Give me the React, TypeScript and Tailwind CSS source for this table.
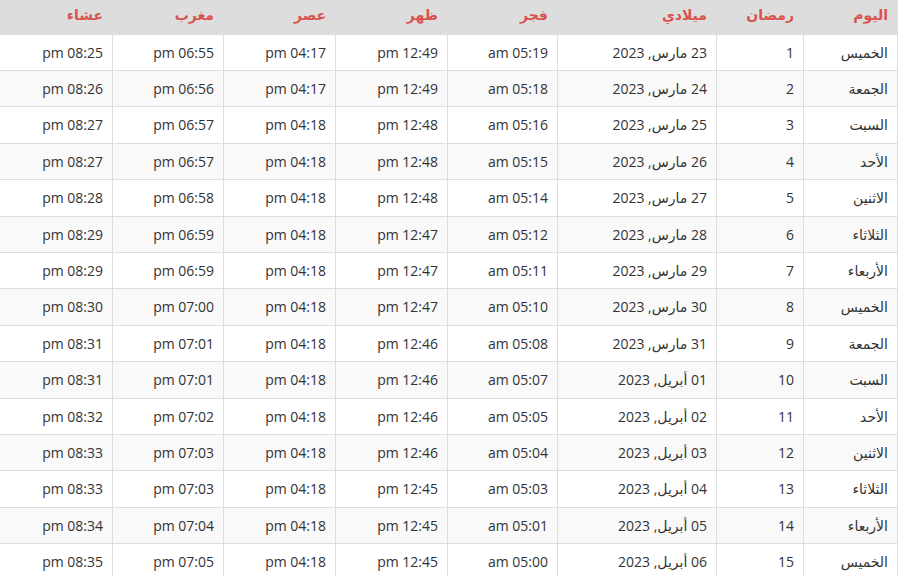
import React from 'react';

interface Row {
  day: string;
  ramadan: number;
  date: string;
  fajr: string;
  dhuhr: string;
  asr: string;
  maghrib: string;
  isha: string;
}

const rows: Row[] = [
  { day: 'الخميس', ramadan: 1, date: '23 مارس, 2023', fajr: '05:19 am', dhuhr: '12:49 pm', asr: '04:17 pm', maghrib: '06:55 pm', isha: '08:25 pm' },
  { day: 'الجمعة', ramadan: 2, date: '24 مارس, 2023', fajr: '05:18 am', dhuhr: '12:49 pm', asr: '04:17 pm', maghrib: '06:56 pm', isha: '08:26 pm' },
  { day: 'السبت', ramadan: 3, date: '25 مارس, 2023', fajr: '05:16 am', dhuhr: '12:48 pm', asr: '04:18 pm', maghrib: '06:57 pm', isha: '08:27 pm' },
  { day: 'الأحد', ramadan: 4, date: '26 مارس, 2023', fajr: '05:15 am', dhuhr: '12:48 pm', asr: '04:18 pm', maghrib: '06:57 pm', isha: '08:27 pm' },
  { day: 'الاثنين', ramadan: 5, date: '27 مارس, 2023', fajr: '05:14 am', dhuhr: '12:48 pm', asr: '04:18 pm', maghrib: '06:58 pm', isha: '08:28 pm' },
  { day: 'الثلاثاء', ramadan: 6, date: '28 مارس, 2023', fajr: '05:12 am', dhuhr: '12:47 pm', asr: '04:18 pm', maghrib: '06:59 pm', isha: '08:29 pm' },
  { day: 'الأربعاء', ramadan: 7, date: '29 مارس, 2023', fajr: '05:11 am', dhuhr: '12:47 pm', asr: '04:18 pm', maghrib: '06:59 pm', isha: '08:29 pm' },
  { day: 'الخميس', ramadan: 8, date: '30 مارس, 2023', fajr: '05:10 am', dhuhr: '12:47 pm', asr: '04:18 pm', maghrib: '07:00 pm', isha: '08:30 pm' },
  { day: 'الجمعة', ramadan: 9, date: '31 مارس, 2023', fajr: '05:08 am', dhuhr: '12:46 pm', asr: '04:18 pm', maghrib: '07:01 pm', isha: '08:31 pm' },
  { day: 'السبت', ramadan: 10, date: '01 أبريل, 2023', fajr: '05:07 am', dhuhr: '12:46 pm', asr: '04:18 pm', maghrib: '07:01 pm', isha: '08:31 pm' },
  { day: 'الأحد', ramadan: 11, date: '02 أبريل, 2023', fajr: '05:05 am', dhuhr: '12:46 pm', asr: '04:18 pm', maghrib: '07:02 pm', isha: '08:32 pm' },
  { day: 'الاثنين', ramadan: 12, date: '03 أبريل, 2023', fajr: '05:04 am', dhuhr: '12:46 pm', asr: '04:18 pm', maghrib: '07:03 pm', isha: '08:33 pm' },
  { day: 'الثلاثاء', ramadan: 13, date: '04 أبريل, 2023', fajr: '05:03 am', dhuhr: '12:45 pm', asr: '04:18 pm', maghrib: '07:03 pm', isha: '08:33 pm' },
  { day: 'الأربعاء', ramadan: 14, date: '05 أبريل, 2023', fajr: '05:01 am', dhuhr: '12:45 pm', asr: '04:18 pm', maghrib: '07:04 pm', isha: '08:34 pm' },
  { day: 'الخميس', ramadan: 15, date: '06 أبريل, 2023', fajr: '05:00 am', dhuhr: '12:45 pm', asr: '04:18 pm', maghrib: '07:05 pm', isha: '08:35 pm' },
];

const headers = ['اليوم', 'رمضان', 'ميلادي', 'فجر', 'ظهر', 'عصر', 'مغرب', 'عشاء'];

export default function App() {
  return (
    <div className="w-[900px] h-[576px] overflow-hidden bg-white">
      <table
        dir="rtl"
        className="table-fixed border-collapse w-[899px] ml-[-1px] text-[14px] text-[#333] font-['Open_Sans','DejaVu_Sans',sans-serif]"
      >
        <colgroup>
          <col className="w-[94px]" />
          <col className="w-[87px]" />
          <col className="w-[159px]" />
          <col className="w-[110px]" />
          <col className="w-[112px]" />
          <col className="w-[112px]" />
          <col className="w-[111px]" />
          <col className="w-[113px]" />
        </colgroup>
        <thead>
          <tr className="bg-[#dddddd] h-[34px]">
            {headers.map((h) => (
              <th
                key={h}
                className="px-[9px] pb-[3px] text-right font-bold text-[#d9534f] border-x border-b border-[#dddddd] leading-[20px]"
              >
                {h}
              </th>
            ))}
          </tr>
        </thead>
        <tbody>
          {rows.map((r, i) => (
            <tr key={r.ramadan} className={i % 2 === 1 ? 'bg-[#f9f9f9]' : 'bg-white'}>
              {[r.day, String(r.ramadan), r.date, r.fajr, r.dhuhr, r.asr, r.maghrib, r.isha].map((v, j) => (
                <td
                  key={j}
                  className="px-[9px] py-2 leading-[19.4px] text-right border border-[#dddddd] whitespace-nowrap"
                >
                  {v}
                </td>
              ))}
            </tr>
          ))}
        </tbody>
      </table>
    </div>
  );
}
